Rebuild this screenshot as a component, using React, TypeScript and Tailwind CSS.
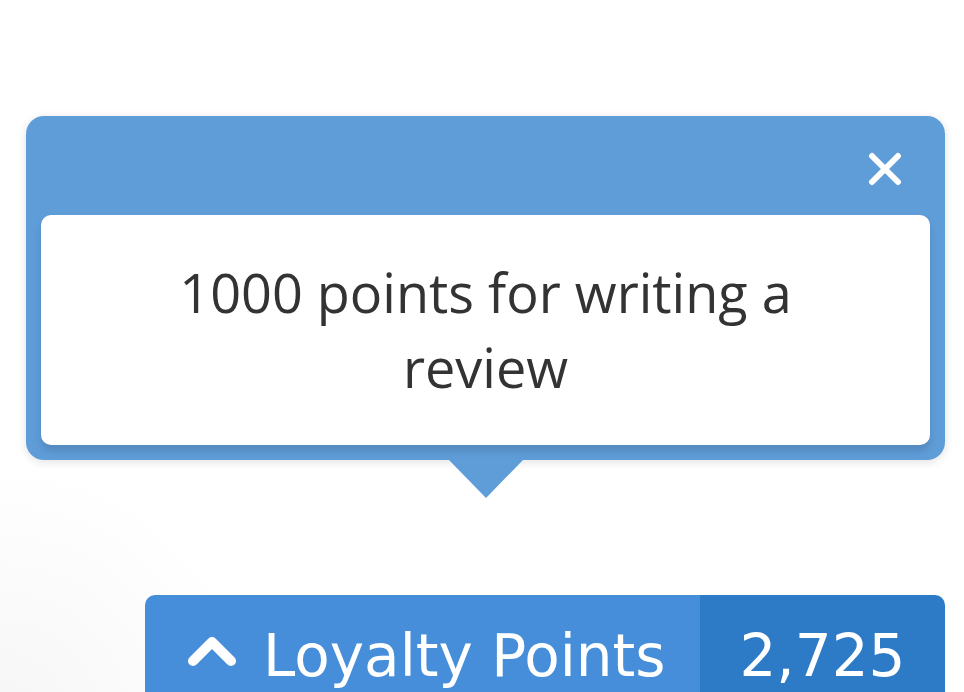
import React from "react";

const ChevronUp = () => (
  <svg width="50" height="32" viewBox="0 0 50 32" fill="none">
    <polyline
      points="6,26 25,7 44,26"
      stroke="white"
      strokeWidth="10"
      strokeLinecap="round"
      strokeLinejoin="round"
    />
  </svg>
);

const CloseIcon = () => (
  <svg width="34" height="34" viewBox="0 0 34 34" fill="none">
    <path d="M4 4 L30 30 M30 4 L4 30" stroke="white" strokeWidth="6" strokeLinecap="round" />
  </svg>
);

const App = () => {
  return (
    <div className="min-h-screen w-full overflow-hidden bg-white bg-[radial-gradient(circle_at_0%_100%,rgba(0,0,0,0.035),transparent_260px)] pt-[116px] pl-[26px] pr-[19px]">
      {/* popup */}
      <div className="flex flex-col items-center">
        <div className="w-full rounded-[18px] bg-[#5f9dd9] shadow-[0_2px_10px_rgba(0,0,0,0.12)] px-[15px] pb-[15px]">
          <div className="flex h-[99px] items-start justify-end pt-[36px] pr-[28px]">
            <button type="button" className="cursor-pointer">
              <CloseIcon />
            </button>
          </div>
          <div className="rounded-[10px] bg-white py-[40px] px-10 text-center text-[54px] leading-[75px] text-[#333333] shadow-[0_6px_8px_rgba(0,0,0,0.13)] [font-family:'Open_Sans',sans-serif]">
            <p className="mx-auto max-w-[700px]">1000 points for writing a review</p>
          </div>
        </div>
        <div className="h-0 w-0 border-l-[37px] border-r-[37px] border-t-[38px] border-l-transparent border-r-transparent border-t-[#5f9dd9]" />
      </div>

      {/* loyalty points button */}
      <div className="mt-[97px] ml-[119px] flex overflow-hidden rounded-t-[10px] text-white [font-family:'DejaVu_Sans',sans-serif] text-[58px] leading-[68px]">
        <div className="flex w-[555px] items-start gap-[26px] bg-[#468ed9] pl-[42px] pt-[27px] pb-[30px]">
          <div className="pt-[13px]">
            <ChevronUp />
          </div>
          <span>Loyalty Points</span>
        </div>
        <div className="flex flex-1 justify-center bg-[#2d7bc7] pt-[27px] pb-[30px]">
          <span>2,725</span>
        </div>
      </div>
    </div>
  );
};

export default App;
